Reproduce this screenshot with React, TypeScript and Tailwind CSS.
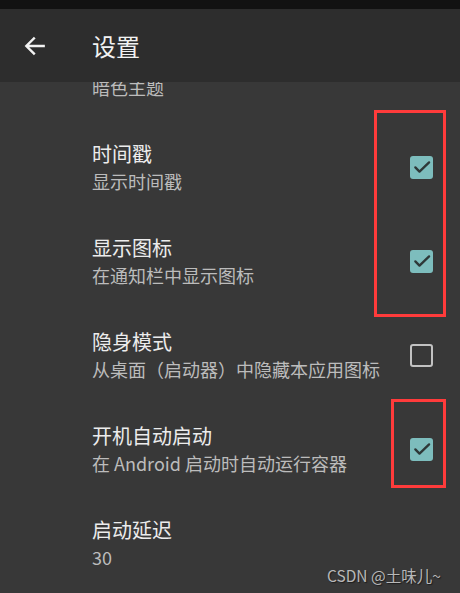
import React from 'react';

const font = { fontFamily: '"Noto Sans CJK SC", Roboto, "Noto Sans", sans-serif' };

type Item = { title: string; summary: string; checked?: boolean };

// first row is scrolled up under the toolbar, only its summary shows
const items: Item[] = [
  { title: '', summary: '暗色主题' },
  { title: '时间戳', summary: '显示时间戳', checked: true },
  { title: '显示图标', summary: '在通知栏中显示图标', checked: true },
  { title: '隐身模式', summary: '从桌面（启动器）中隐藏本应用图标', checked: false },
  { title: '开机自动启动', summary: '在 Android 启动时自动运行容器', checked: true },
  { title: '启动延迟', summary: '30' },
];

const CheckBox = ({ checked }: { checked: boolean }) =>
  checked ? (
    <div className="w-[23px] h-[23px] rounded-[3px] bg-[#7dbdbd] flex items-center justify-center">
      <svg width="20" height="20" viewBox="0 0 24 24" fill="none">
        <path d="M4 12.5l5 5L20.5 6.5" stroke="#2e3838" strokeWidth="2.8" strokeLinecap="round" strokeLinejoin="round" />
      </svg>
    </div>
  ) : (
    <div className="w-[23px] h-[23px] rounded-[3px] border-[2.5px] border-[#c2c2c2]" />
  );

export default function App() {
  return (
    <div className="w-[460px] h-[593px] bg-[#383838] flex flex-col overflow-hidden relative" style={font}>
      <div className="h-[9px] bg-[#121212] shrink-0" />
      <div className="h-[73px] bg-[#2d2d2d] flex items-center shrink-0 relative z-10">
        <div className="w-[92px] pl-[22px] flex items-center">
          <svg width="26" height="26" viewBox="0 0 24 24" fill="none">
            <path d="M20 12H4.5M11 5l-7 7 7 7" stroke="#f2f2f2" strokeWidth="2.2" strokeLinecap="square" />
          </svg>
        </div>
        <span className="text-[24px] leading-[30px] text-[#f2f2f2]">设置</span>
      </div>

      <div className="flex-1 overflow-hidden">
        <div className="-mt-[56px]">
          {items.map((it) => (
            <div key={it.summary} className="h-[94px] flex items-center pl-[92px] pr-[27px]">
              <div className="flex-1 flex flex-col">
                <span className="h-[28px] text-[20px] leading-[28px] text-[#ececec]">{it.title}</span>
                <span className="text-[18px] leading-[26px] text-[#bcbcbc]">{it.summary}</span>
              </div>
              {it.checked !== undefined && <CheckBox checked={it.checked} />}
            </div>
          ))}
        </div>
      </div>

      <div className="absolute left-[374px] top-[110px] w-[72px] h-[207px] border-[3px] border-[#ff3b3b]" />
      <div className="absolute left-[391px] top-[399px] w-[55px] h-[89px] border-[3px] border-[#ff3b3b]" />

      <span
        className="absolute left-[327px] top-[564px] text-[15.5px] leading-[22px] text-[#b8b8b8]"
        style={{ textShadow: '1px 1px 1px rgba(0,0,0,0.5)' }}
      >
        CSDN @土味儿~
      </span>
    </div>
  );
}
